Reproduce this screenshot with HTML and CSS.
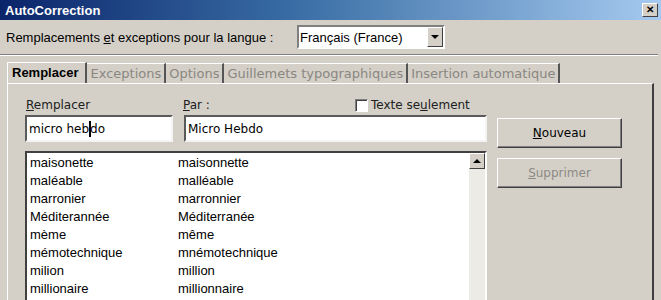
FILE: index.html
```html
<!DOCTYPE html>
<html lang="fr">
<head>
  <meta charset="UTF-8">
  <title>AutoCorrection</title>
  <link rel="stylesheet" href="styles.css">
</head>
<body>
  <div class="dialog">
    <div class="titlebar">
      <span class="title">AutoCorrection</span>
      <span class="close">✕</span>
    </div>

    <div class="langrow">
      <span class="lang-label">Remplacements <u>e</u>t exceptions pour la langue :</span>
      <div class="select">
        <span class="select-value">Français (France)</span>
        <span class="select-arrow"><span class="tri-down"></span></span>
      </div>
    </div>
    <div class="separator"></div>

    <div class="tabs">
      <span class="tab active">Remplacer</span>
      <span class="tab">Exceptions</span>
      <span class="tab">Options</span>
      <span class="tab">Guillemets typographiques</span>
      <span class="tab">Insertion automatique</span>
    </div>

    <div class="panel">
      <div class="left">
        <div class="labels">
          <span class="lbl lbl-repl"><u>R</u>emplacer</span>
          <span class="lbl lbl-par"><u>P</u>ar :</span>
          <span class="check"><span class="box"></span><span>Texte se<u>u</u>lement</span></span>
        </div>
        <div class="inputs">
          <div class="field field-repl"><span>micro heb</span><span class="caret"></span><span>do</span></div>
          <div class="field field-par">Micro Hebdo</div>
        </div>
        <div class="list">
          <div class="rows" id="rows"></div>
          <div class="scrollbar">
            <span class="scroll-up"><span class="tri-up"></span></span>
          </div>
        </div>
      </div>
      <div class="buttons">
        <span class="btn"><u>N</u>ouveau</span>
        <span class="btn disabled"><u>S</u>upprimer</span>
      </div>
    </div>
  </div>

  <script>
    const entries = [
      ["maisonette", "maisonnette"],
      ["maléable", "malléable"],
      ["marronier", "marronnier"],
      ["Méditerannée", "Méditerranée"],
      ["mème", "même"],
      ["mémotechnique", "mnémotechnique"],
      ["milion", "million"],
      ["millionaire", "millionnaire"]
    ];
    const rows = document.getElementById("rows");
    entries.forEach(([from, to]) => {
      const row = document.createElement("div");
      row.className = "row";
      row.innerHTML = `<span class="col-from">${from}</span><span class="col-to">${to}</span>`;
      rows.appendChild(row);
    });
  </script>
</body>
</html>
```

FILE: styles.css
```css
* {
  box-sizing: border-box;
}
body {
  margin: 0;
  background: #d4d0c8;
  font-family: 'Liberation Sans', Arial, sans-serif;
  color: #000;
  overflow: hidden;
}
.dialog {
  width: 661px;
  height: 300px;
  overflow: hidden;
}
.titlebar {
  height: 20px;
  background: linear-gradient(to right, #0a246a, #3a6ea5 45%, #a6caf0);
  display: flex;
  align-items: center;
  justify-content: space-between;
  padding: 0 3px 0 5px;
}
.title {
  color: white;
  font-weight: bold;
  font-size: 13px;
}
.close {
  width: 16px;
  height: 14px;
  background: #d4d0c8;
  border: 1px solid;
  border-color: #fff #404040 #404040 #fff;
  font-size: 10px;
  font-weight: bold;
  line-height: 12px;
  text-align: center;
}
.langrow {
  height: 34px;
  display: flex;
  align-items: center;
  padding-left: 6px;
}
.lang-label {
  font-size: 13px;
  width: 291px;
}
.select {
  width: 148px;
  height: 24px;
  background: white;
  border: 2px solid;
  border-color: #808080 #fff #fff #808080;
  display: flex;
  align-items: center;
  justify-content: space-between;
}
.select-value {
  font-size: 13px;
  padding-left: 1px;
}
.select-arrow {
  width: 16px;
  height: 20px;
  background: #d4d0c8;
  border: 1px solid;
  border-color: #fff #404040 #404040 #fff;
  display: flex;
  align-items: center;
  justify-content: center;
}
.tri-down, .tri-up {
  width: 0;
  height: 0;
  border-left: 4px solid transparent;
  border-right: 4px solid transparent;
}
.tri-down {
  border-top: 4px solid #000;
}
.tri-up {
  border-bottom: 4px solid #000;
}
.separator {
  height: 2px;
  border-top: 1px solid #808080;
  border-bottom: 1px solid #fff;
  margin-right: 3px;
}
.tabs {
  display: flex;
  padding: 6px 0 0 7px;
  height: 27px;
  font-family: 'DejaVu Sans', sans-serif;
  font-size: 13px;
}
.tab {
  height: 20px;
  line-height: 19px;
  padding: 0 3px;
  color: #8a8782;
  border-top: 1px solid #fff;
  border-right: 2px solid #555;
  margin-top: 1px;
}
.tab.active {
  color: #000;
  font-family: 'Liberation Sans', Arial, sans-serif;
  font-weight: bold;
  font-size: 13px;
  padding: 0 7px 0 4px;
  height: 21px;
  margin-top: 0;
  border-left: 1px solid #fff;
  background: #d4d0c8;
}
.panel {
  margin: 0 7px 0 7px;
  border-top: 1px solid #fff;
  border-left: 1px solid #fff;
  border-right: 2px solid #404040;
  height: 230px;
  display: flex;
  gap: 10px;
  padding: 11px 0 0 17px;
  font-family: 'DejaVu Sans', sans-serif;
  font-size: 12px;
}
.left {
  width: 462px;
  display: flex;
  flex-direction: column;
}
.labels {
  display: flex;
  align-items: center;
  height: 20px;
  color: #202020;
}
.lbl-repl {
  width: 158px;
  padding-left: 1px;
}
.lbl-par {
  width: 172px;
}
.check {
  display: flex;
  align-items: center;
  gap: 3px;
}
.box {
  width: 13px;
  height: 13px;
  background: white;
  border: 1px solid;
  border-color: #808080 #fff #fff #808080;
  box-shadow: inset 1px 1px 0 #404040;
}
.inputs {
  display: flex;
  gap: 11px;
}
.field {
  height: 27px;
  background: white;
  border: 2px solid;
  border-color: #5a5a5a #f4f4f4 #f4f4f4 #5a5a5a;
  display: flex;
  align-items: center;
  padding-left: 2px;
  font-size: 12px;
}
.field-repl {
  width: 148px;
}
.field-par {
  width: 303px;
}
.caret {
  width: 2px;
  height: 16px;
  background: #000;
  margin-right: -1px;
}
.list {
  margin-top: 9px;
  height: 160px;
  background: white;
  border: 2px solid;
  border-color: #404040 #fff #fff #404040;
  display: flex;
  justify-content: space-between;
}
.rows {
  padding: 1px 0 0 3px;
  font-family: 'Liberation Sans', Arial, sans-serif;
  font-size: 13px;
}
.row {
  display: flex;
  height: 18px;
  line-height: 18px;
}
.col-from {
  width: 148px;
}
.scrollbar {
  width: 16px;
  background: #ecebe6;
}
.scroll-up {
  display: flex;
  align-items: center;
  justify-content: center;
  height: 16px;
  background: #d4d0c8;
  border: 1px solid;
  border-color: #fff #404040 #404040 #fff;
}
.buttons {
  display: flex;
  flex-direction: column;
  gap: 10px;
  padding-top: 23px;
}
.btn {
  width: 125px;
  height: 30px;
  border: 1px solid;
  border-color: #fff #404040 #404040 #fff;
  box-shadow: inset -1px -1px 0 #808080;
  display: flex;
  align-items: center;
  justify-content: center;
  font-size: 12px;
}
.btn.disabled {
  color: #8d8a85;
}
```
